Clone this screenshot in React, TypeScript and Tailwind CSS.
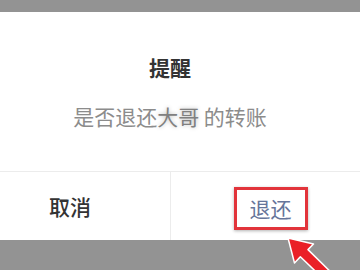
import React from 'react';

const App: React.FC = () => {
  return (
    <div
      className="relative w-[360px] h-[270px] overflow-hidden bg-[#939393] pt-[12px]"
      style={{ fontFamily: '"Noto Sans CJK SC", "Noto Sans", sans-serif' }}
    >
      <div className="w-[400px] ml-[-30px] h-[228px] bg-white flex flex-col">
        <div className="h-[159px] flex flex-col items-center pt-[43px]">
          <h2 className="text-[21px] leading-[25px] font-bold text-[#333]">提醒</h2>
          <p className="mt-[24px] text-[21px] leading-[25px] text-[#8c8c8c]">
            是否退还<span className="text-[#808080] [text-shadow:0_0_4px_#bbb]">大哥</span> 的转账
          </p>
        </div>
        <div className="flex-1 flex border-t border-[#ececec]">
          <button className="w-[200px] flex items-center justify-center text-[21px] leading-[25px] font-medium text-[#333]">
            取消
          </button>
          <button className="w-[200px] flex items-center justify-center border-l border-[#ececec]">
            <span className="border-[3px] border-[#e2343b] px-[13px] py-[6px] mt-[4px] text-[21px] leading-[25px] text-[#66759a] shadow-[0_1px_3px_rgba(0,0,0,0.3)]">
              退还
            </span>
          </button>
        </div>
      </div>

      {/* red arrow */}
      <svg className="absolute left-[280px] top-[230px]" width="80" height="40" viewBox="0 0 80 40">
        <polygon
          points="8,8 33.5,14 28,19.6 56,47.2 49.2,54.4 20.35,26.8 14.5,33"
          fill="#ea2027"
          stroke="#fff"
          strokeWidth="1.5"
          strokeLinejoin="round"
        />
      </svg>
    </div>
  );
};

export default App;
